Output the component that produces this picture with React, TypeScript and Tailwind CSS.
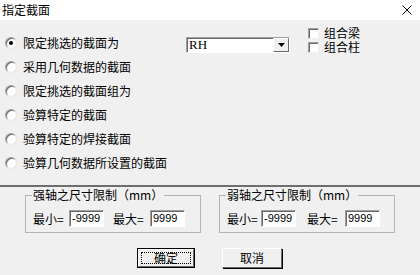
import React from "react";

const cjk = { fontFamily: '"Noto Sans CJK SC", "Liberation Sans", sans-serif' };
const num = { fontFamily: '"Liberation Sans", "Noto Sans CJK SC", sans-serif' };

const radios = [
  "限定挑选的截面为",
  "采用几何数据的截面",
  "限定挑选的截面组为",
  "验算特定的截面",
  "验算特定的焊接截面",
  "验算几何数据所设置的截面",
];

const Radio = ({ checked }: { checked?: boolean }) => (
  <span className="relative w-[12px] h-[12px] rounded-full bg-white border border-t-[#a0a0a0] border-l-[#a0a0a0] border-r-[#e6e6e6] border-b-[#e6e6e6] shadow-[inset_1px_1px_0_#696969] flex items-center justify-center shrink-0">
    {checked && <span className="w-[4px] h-[4px] rounded-full bg-black" />}
  </span>
);

const Check = () => (
  <span className="w-[11px] h-[11px] bg-white border border-t-[#a0a0a0] border-l-[#a0a0a0] border-r-[#f0f0f0] border-b-[#f0f0f0] shadow-[inset_1px_1px_0_#696969] shrink-0" />
);

const Field = ({ value }: { value: string }) => (
  <div
    className="w-[35px] h-[17px] bg-white border border-t-[#a0a0a0] border-l-[#a0a0a0] border-r-[#ffffff] border-b-[#ffffff] shadow-[inset_1px_1px_0_#696969] text-[11px] leading-[15px] pl-[2px] text-black"
    style={num}
  >
    {value}
  </div>
);

const Group = ({ title, pad }: { title: string; pad: number[] }) => (
  <fieldset className="w-[176px] border border-[#b4b4b4] pb-[5px]">
    <legend className="ml-[6px] px-[1px] text-[12px] leading-[12px] text-black">{title}</legend>
    <div className="flex items-center mt-[9px] pl-[7px] text-[12px] text-black">
      <span className="leading-[17px]" style={{ width: pad[0] }}>最小=</span>
      <Field value="-9999" />
      <span className="leading-[17px]" style={{ marginLeft: pad[1], width: pad[2] }}>最大=</span>
      <Field value="9999" />
    </div>
  </fieldset>
);

export default function App() {
  return (
    <div className="w-[420px] h-[275px] bg-[#f0f0f0] flex flex-col overflow-hidden" style={cjk}>
      <div className="h-[20px] bg-white flex items-center justify-between pl-[2px] pr-[8px]">
        <span className="text-[12px] text-black leading-[12px]">指定截面</span>
        <svg width="10" height="10" viewBox="0 0 10 10">
          <path d="M0.5 0.5 L9.5 9.5 M9.5 0.5 L0.5 9.5" stroke="#000" strokeWidth="1" />
        </svg>
      </div>

      <div className="h-[165px] flex">
        <div className="w-[186px] mt-[11px] pl-[5px] flex flex-col">
          {radios.map((r, i) => (
            <div key={r} className="h-[24px] flex items-center gap-[6px] text-[12px] text-black">
              <Radio checked={i === 0} />
              <span className="leading-[12px]">{r}</span>
            </div>
          ))}
        </div>

        <div className="w-[104px] h-[16px] mt-[17px] bg-white flex border border-t-[#a0a0a0] border-l-[#a0a0a0] border-r-[#ffffff] border-b-[#ffffff] shadow-[inset_1px_1px_0_#696969]">
          <span
            className="flex-1 pl-[2px] text-[13px] leading-[14px] text-black"
            style={{ fontFamily: '"Liberation Serif", serif' }}
          >
            RH
          </span>
          <div className="w-[16px] h-[14px] bg-[#f0f0f0] border border-t-[#ffffff] border-l-[#ffffff] border-r-[#696969] border-b-[#696969] flex items-center justify-center">
            <svg width="7" height="4" viewBox="0 0 7 4">
              <path d="M0 0 H7 L3.5 4 Z" fill="#000" />
            </svg>
          </div>
        </div>

        <div className="ml-[18px] mt-[6px] flex flex-col">
          {["组合梁", "组合柱"].map((c) => (
            <div key={c} className="h-[14px] flex items-center gap-[5px] text-[12px] text-black">
              <Check />
              <span className="leading-[14px]">{c}</span>
            </div>
          ))}
        </div>
      </div>

      <div className="h-[2px] bg-[#6e6e6e]" />

      <div className="flex pt-[2px] pl-[25px] gap-[18px]">
        <Group title="强轴之尺寸限制（mm）" pad={[36, 9, 37]} />
        <Group title="弱轴之尺寸限制（mm）" pad={[34, 11, 38]} />
      </div>

      <div className="flex pl-[137px] mt-[15px] gap-[27px] text-[12px] text-black">
        <div className="w-[58px] h-[20px] border border-black flex">
          <div className="flex-1 border border-t-[#ffffff] border-l-[#ffffff] border-r-[#696969] border-b-[#696969] p-[2px] flex">
            <div className="flex-1 outline outline-1 outline-dotted outline-black -outline-offset-1 flex items-center justify-center leading-[12px]">
              确定
            </div>
          </div>
        </div>
        <div className="w-[60px] h-[20px] border border-t-[#ffffff] border-l-[#ffffff] border-r-[#696969] border-b-[#696969] shadow-[1px_1px_0_#000] flex items-center justify-center leading-[12px]">
          取消
        </div>
      </div>
    </div>
  );
}
